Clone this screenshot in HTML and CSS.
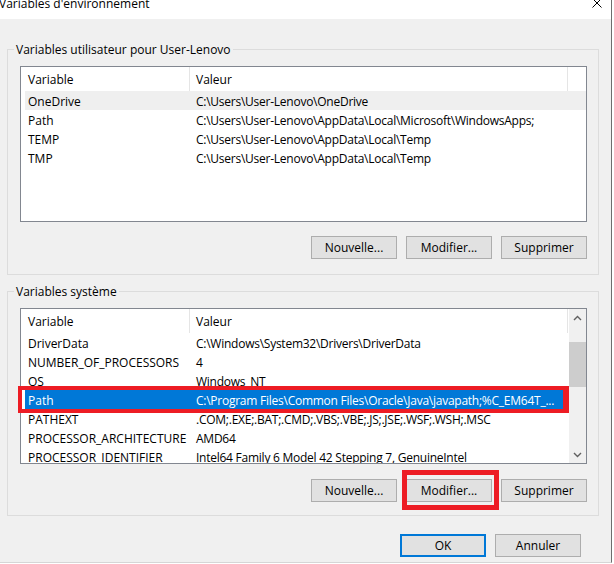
FILE: index.html
```html
<!DOCTYPE html>
<html lang="fr">
<head>
<meta charset="utf-8">
<title>Variables d'environnement</title>
<link rel="stylesheet" href="styles.css">
</head>
<body>
<div class="window">
  <div class="titlebar">
    <span class="title">Variables d'environnement</span>
    <svg class="close" width="10" height="10" viewBox="0 0 10 10"><path d="M0.5 0.5 L9.5 9.5 M9.5 0.5 L0.5 9.5" stroke="#000" stroke-width="1" fill="none"/></svg>
  </div>
  <div class="content">
    <div class="group g1">
      <div class="legend">Variables utilisateur pour User-Lenovo</div>
      <div class="list">
        <div class="rows">
          <div class="row head"><div class="c1">Variable</div><div class="c2">Valeur</div></div>
          <div class="row hover"><div class="c1">OneDrive</div><div class="c2">C:\Users\User-Lenovo\OneDrive</div></div>
          <div class="row"><div class="c1">Path</div><div class="c2">C:\Users\User-Lenovo\AppData\Local\Microsoft\WindowsApps;</div></div>
          <div class="row"><div class="c1">TEMP</div><div class="c2">C:\Users\User-Lenovo\AppData\Local\Temp</div></div>
          <div class="row"><div class="c1">TMP</div><div class="c2">C:\Users\User-Lenovo\AppData\Local\Temp</div></div>
        </div>
      </div>
      <div class="btns">
        <button class="btn">Nouvelle...</button>
        <button class="btn">Modifier...</button>
        <button class="btn">Supprimer</button>
      </div>
    </div>
    <div class="group g2">
      <div class="legend">Variables système</div>
      <div class="list">
        <div class="rows">
          <div class="row head"><div class="c1">Variable</div><div class="c2">Valeur</div></div>
          <div class="row"><div class="c1">DriverData</div><div class="c2">C:\Windows\System32\Drivers\DriverData</div></div>
          <div class="row"><div class="c1">NUMBER_OF_PROCESSORS</div><div class="c2">4</div></div>
          <div class="row"><div class="c1">OS</div><div class="c2">Windows_NT</div></div>
          <div class="row selected"><div class="c1">Path</div><div class="c2">C:\Program Files\Common Files\Oracle\Java\javapath;%C_EM64T_...</div></div>
          <div class="row"><div class="c1">PATHEXT</div><div class="c2">.COM;.EXE;.BAT;.CMD;.VBS;.VBE;.JS;.JSE;.WSF;.WSH;.MSC</div></div>
          <div class="row"><div class="c1">PROCESSOR_ARCHITECTURE</div><div class="c2">AMD64</div></div>
          <div class="row"><div class="c1">PROCESSOR_IDENTIFIER</div><div class="c2">Intel64 Family 6 Model 42 Stepping 7, GenuineIntel</div></div>
        </div>
        <div class="scrollbar">
          <div class="arrow"><svg width="9" height="6" viewBox="0 0 9 6"><path d="M1 5 L4.5 1.5 L8 5" stroke="#606060" stroke-width="1.4" fill="none"/></svg></div>
          <div class="track"><div class="thumb"></div></div>
          <div class="arrow"><svg width="9" height="6" viewBox="0 0 9 6"><path d="M1 1 L4.5 4.5 L8 1" stroke="#606060" stroke-width="1.4" fill="none"/></svg></div>
        </div>
        <div class="mark-row"></div>
      </div>
      <div class="btns">
        <button class="btn">Nouvelle...</button>
        <button class="btn marked">Modifier...</button>
        <button class="btn">Supprimer</button>
      </div>
    </div>
    <div class="dlg-btns">
      <button class="btn default">OK</button>
      <button class="btn">Annuler</button>
    </div>
  </div>
</div>
</body>
</html>
```

FILE: styles.css
```css
*, *::before, *::after { box-sizing: border-box; }

html, body {
  margin: 0;
  padding: 0;
  width: 614px;
  height: 564px;
  overflow: hidden;
  background: #ffffff;
}

body {
  font-family: "Segoe UI", "Open Sans", sans-serif;
  font-size: 12px;
  color: #000;
}

.window {
  width: 612px;
  height: 563px;
  border-right: 1px solid #6e6e6e;
  border-bottom: 1px solid #d6d6d6;
  display: flex;
  flex-direction: column;
  background: #f0f0f0;
}

.titlebar {
  height: 19px;
  background: #ffffff;
  display: flex;
  align-items: flex-start;
  overflow: hidden;
  padding-right: 9px;
}

.title {
  line-height: 12px;
  margin-top: -2px;
  margin-left: -1px;
  white-space: nowrap;
}

.close {
  margin-left: auto;
  margin-top: -2px;
  display: block;
}

.content {
  flex: 1;
  padding: 30px 12px 0 7px;
  display: flex;
  flex-direction: column;
}

.group {
  border: 1px solid #dcdcdc;
  padding: 0 11px 15px 12px;
}

.g2 {
  margin-top: 16px;
  padding-bottom: 13px;
}

.legend {
  margin: -8px 0 0 -6px;
  padding: 0 2px;
  width: fit-content;
  line-height: 16px;
  background: #f0f0f0;
  white-space: nowrap;
}

.list {
  position: relative;
  margin-top: 8px;
  height: 156px;
  border: 1px solid #828790;
  background: #ffffff;
  display: flex;
}

.rows {
  flex: 1;
  overflow: hidden;
  padding-left: 4px;
}

.row {
  display: grid;
  grid-template-columns: 165px 378px;
  height: 19px;
  line-height: 21px;
  white-space: nowrap;
}

.row .c1 { padding-left: 3px; overflow: hidden; }
.row .c2 { padding-left: 6px; overflow: hidden; letter-spacing: -0.25px; }

.row.head {
  height: 24px;
  line-height: 26px;
}

.row.head .c2 { letter-spacing: 0; }

.row.head .c1,
.row.head .c2 {
  border-right: 1px solid #e5e5e5;
}

.row.hover { background: #efefef; }

.row.selected {
  background: #0078d7;
  color: #ffffff;
}

.scrollbar {
  width: 17px;
  background: #f0f0f0;
  display: flex;
  flex-direction: column;
}

.arrow {
  height: 17px;
  display: flex;
  align-items: center;
  justify-content: center;
}

.arrow svg { display: block; }

.track {
  flex: 1;
  padding-top: 16px;
}

.thumb {
  height: 45px;
  background: #cdcdcd;
}

.mark-row {
  position: absolute;
  left: -3px;
  top: 77px;
  width: 551px;
  height: 27px;
  border: 4px solid #ed1c24;
  border-right-width: 6px;
  pointer-events: none;
}

.btns {
  display: flex;
  justify-content: flex-end;
  gap: 9px;
  margin-top: 14px;
}

.g2 .btns { margin-top: 15px; }

.btn {
  width: 86px;
  height: 23px;
  margin: 0;
  padding: 0;
  font-family: inherit;
  font-size: 12px;
  color: #000;
  background: #e1e1e1;
  border: 1px solid #adadad;
  border-radius: 0;
  line-height: 21px;
}

.btn.marked { position: relative; }

.btn.marked::after {
  content: "";
  position: absolute;
  left: -5px;
  top: -10px;
  width: 97px;
  height: 40px;
  border: 5px solid #ed1c24;
}

.btn.default {
  border: 2px solid #0078d7;
  line-height: 19px;
}

.dlg-btns {
  display: flex;
  justify-content: flex-end;
  gap: 9px;
  margin-top: 18px;
  margin-right: 18px;
}
```
